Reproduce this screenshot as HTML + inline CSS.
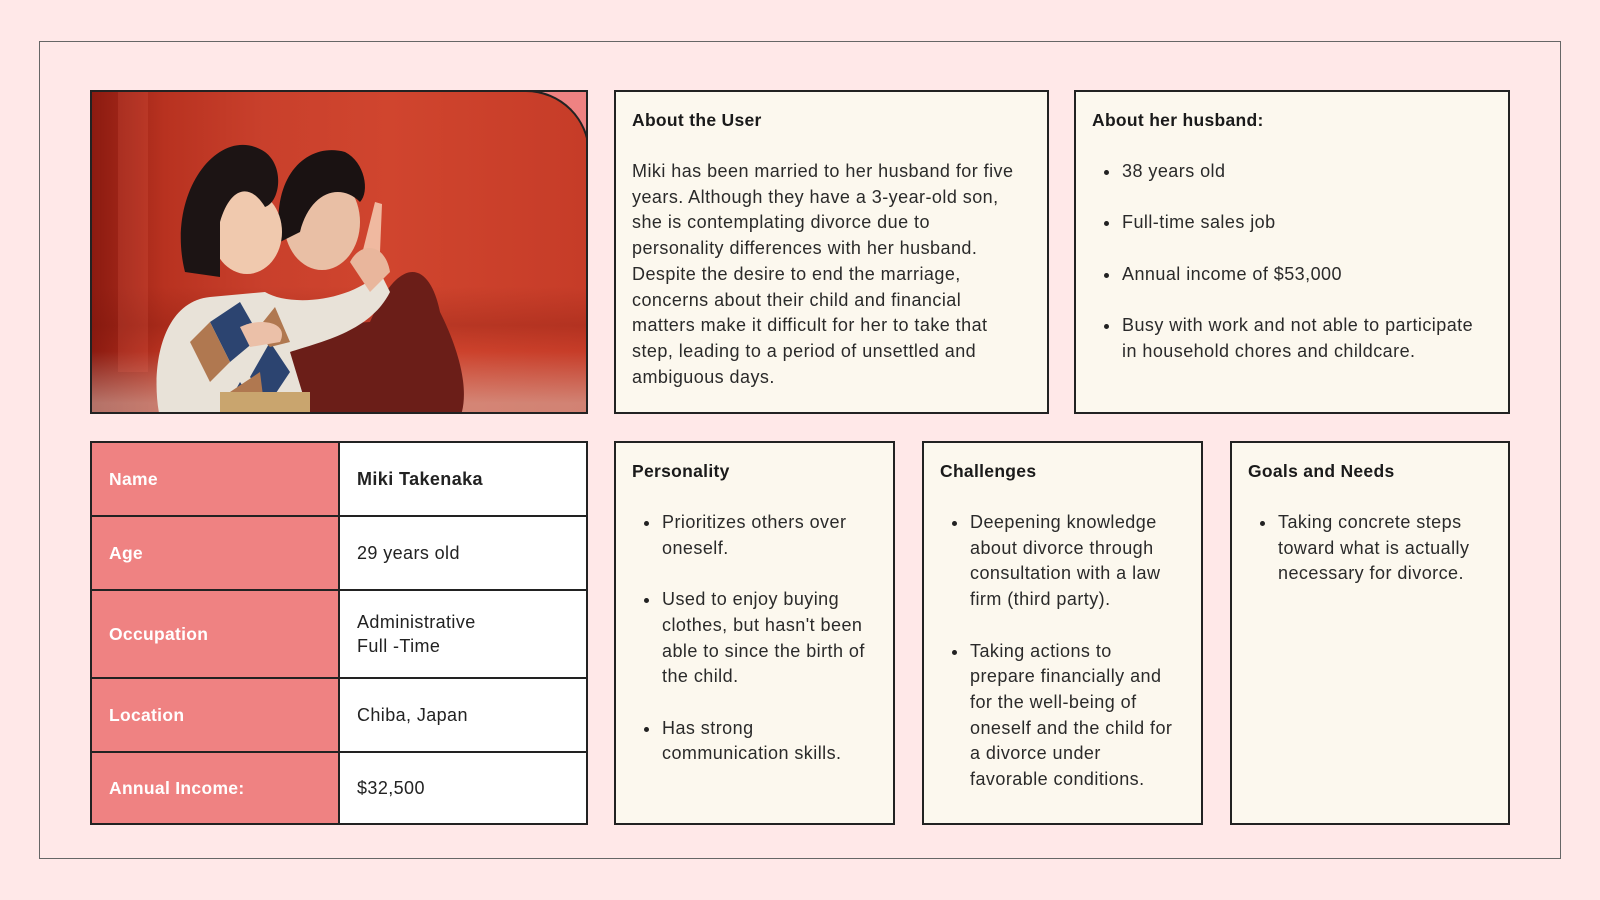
<!DOCTYPE html>
<html><head><meta charset="utf-8"><style>
*{box-sizing:border-box;margin:0;padding:0}
body{width:1600px;height:900px;background:#FFE8E8;font-family:"Liberation Sans",sans-serif;color:#222;position:relative;overflow:hidden}
.frame{position:absolute;left:39px;top:41px;width:1522px;height:818px;border:1.5px solid #666}
.card{position:absolute;background:#FCF8EE;border:2px solid #222;padding:16px 16px;font-size:18px;letter-spacing:0.45px;line-height:25.7px;color:#2a2a2a;white-space:nowrap}
.card h3{font-size:17.5px;letter-spacing:0.3px;font-weight:bold;color:#1a1a1a;line-height:25px;margin-bottom:26px}
.card ul{list-style:none}
.card li{position:relative;padding-left:30px;margin-bottom:25.7px}
.card li:before{content:"";position:absolute;left:12px;top:11px;width:5px;height:5px;border-radius:50%;background:#222}
.tbl{position:absolute;left:90px;top:441px;width:498px;height:384px;border:2px solid #222;background:#fff}
.row{position:absolute;left:0;width:494px;border-bottom:2px solid #222;display:flex}
.row:last-child{border-bottom:none}
.row .l{width:248px;background:#EF8282;border-right:2px solid #222;color:#fff;font-weight:bold;font-size:17.5px;letter-spacing:0.3px;padding-left:17px;display:flex;align-items:center}
.row .r{flex:1;font-size:18px;letter-spacing:0.4px;padding-left:17px;display:flex;flex-direction:column;justify-content:center;line-height:24px;color:#222}
</style></head><body>
<div class="frame"></div>

<div style="position:absolute;left:90px;top:90px;width:498px;height:324px;background:#EF8282;border:2px solid #222;overflow:hidden">
 <div style="position:absolute;left:-2px;top:-2px;width:500px;height:326px;border-top-right-radius:64px;border-top:2px solid #222;border-right:2px solid #222;overflow:hidden;background:linear-gradient(90deg,#8a1a10 0%,#b83220 15%,#c9402c 35%,#d0452e 60%,#c63c28 100%)">
  <div style="position:absolute;left:0;top:0;width:100%;height:100%;background:linear-gradient(180deg,rgba(0,0,0,0) 60%,rgba(120,20,10,.25) 72%,rgba(0,0,0,0) 80%,rgba(220,200,190,.5) 96%)"></div>
  <div style="position:absolute;left:28px;top:0;width:30px;height:280px;background:rgba(255,120,100,.15)"></div>
  <svg width="500" height="326" style="position:absolute;left:0;top:0">
   <path d="M100 326 C100 260 150 240 200 235 L280 230 C310 160 340 170 350 220 C370 260 380 300 370 326 Z" fill="#6b1e18"/>
   <path d="M70 326 C60 280 70 210 120 205 L175 200 C200 215 260 210 290 180 L300 200 C280 240 230 250 200 260 L220 326 Z" fill="#e8e2d8"/>
   <path d="M120 230 L150 210 L170 245 L140 270 Z M180 250 L200 280 L180 310 L160 285Z M150 290 L170 320 L130 326Z" fill="#2c4470"/>
   <path d="M100 250 L120 230 L140 270 L120 290Z M165 240 L185 215 L200 250 L180 255Z M140 300 L170 280 L175 320Z" fill="#b07850"/>
   <ellipse cx="232" cy="130" rx="38" ry="48" fill="#e9bfa5"/>
   <path d="M190 150 C180 80 220 50 255 60 C275 70 280 100 270 110 C250 90 220 100 210 140 Z" fill="#1a1212"/>
   <ellipse cx="157" cy="140" rx="35" ry="42" fill="#f0c9ae"/>
   <path d="M95 180 C75 100 130 30 175 60 C195 75 190 110 175 115 C160 90 140 95 130 130 L130 185 Z" fill="#1c1414"/>
   <path d="M270 170 L285 110 L292 112 L290 160 Z" fill="#f0b9a0"/>
   <path d="M260 170 C270 150 295 150 300 180 L280 200 Z" fill="#e9b69c"/>
   <path d="M150 235 C170 225 200 230 190 250 L160 255 Z" fill="#ebc0a8"/>
   <rect x="130" y="300" width="90" height="26" fill="#c9a56e"/>
  </svg>
 </div>
</div>

<div class="card" style="left:614px;top:90px;width:435px;height:324px">
 <h3>About the User</h3>
 <p>Miki has been married to her husband for five<br>years. Although they have a 3-year-old son,<br>she is contemplating divorce due to<br>personality differences with her husband.<br>Despite the desire to end the marriage,<br>concerns about their child and financial<br>matters make it difficult for her to take that<br>step, leading to a period of unsettled and<br>ambiguous days.</p>
</div>
<div class="card" style="left:1074px;top:90px;width:436px;height:324px">
 <h3>About her husband:</h3>
 <ul><li>38 years old</li><li>Full-time sales job</li><li>Annual income of $53,000</li><li>Busy with work and not able to participate<br>in household chores and childcare.</li></ul>
</div>

<div class="tbl">
 <div class="row" style="top:0;height:74px"><div class="l">Name</div><div class="r"><b>Miki Takenaka</b></div></div>
 <div class="row" style="top:74px;height:74px"><div class="l">Age</div><div class="r">29 years old</div></div>
 <div class="row" style="top:148px;height:88px"><div class="l">Occupation</div><div class="r">Administrative<br>Full -Time</div></div>
 <div class="row" style="top:236px;height:74px"><div class="l">Location</div><div class="r">Chiba, Japan</div></div>
 <div class="row" style="top:310px;height:70px"><div class="l">Annual Income:</div><div class="r">$32,500</div></div>
</div>

<div class="card" style="left:614px;top:441px;width:281px;height:384px">
 <h3>Personality</h3>
 <ul><li>Prioritizes others over<br>oneself.</li><li>Used to enjoy buying<br>clothes, but hasn't been<br>able to since the birth of<br>the child.</li><li>Has strong<br>communication skills.</li></ul>
</div>
<div class="card" style="left:922px;top:441px;width:281px;height:384px">
 <h3>Challenges</h3>
 <ul><li>Deepening knowledge<br>about divorce through<br>consultation with a law<br>firm (third party).</li><li>Taking actions to<br>prepare financially and<br>for the well-being of<br>oneself and the child for<br>a divorce under<br>favorable conditions.</li></ul>
</div>
<div class="card" style="left:1230px;top:441px;width:280px;height:384px">
 <h3>Goals and Needs</h3>
 <ul><li>Taking concrete steps<br>toward what is actually<br>necessary for divorce.</li></ul>
</div>
</body></html>
